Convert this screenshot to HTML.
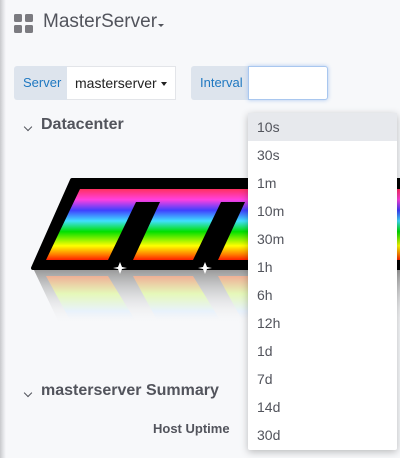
<!DOCTYPE html>
<html><head><style>
*{margin:0;padding:0;box-sizing:border-box}
body{width:400px;height:458px;overflow:hidden;background:#f7f8fa;font-family:"Liberation Sans",Roboto,sans-serif;position:relative;color:#52545c}
.abs{position:absolute}
.shadow{left:0;top:0;width:6px;height:458px;background:linear-gradient(90deg,#c8c9cc,#e6e7ea 60%,#f7f8fa)}
.gi{width:8px;height:8px;background:#7b7b80;border-radius:1.5px}
.lbl{background:#dde4ed;color:#1f78c1;font-size:13px;height:34px;line-height:34px;border-radius:3px 0 0 3px}
.dd{left:248px;top:113px;width:149px;height:337px;background:#fff;box-shadow:0 2px 8px rgba(0,0,0,.25);border-radius:2px}
.dd div{height:28px;line-height:28px;padding-left:9px;font-size:14px;color:#52545c}
.chev{width:6px;height:6px;border-right:1.6px solid #52545c;border-bottom:1.6px solid #52545c;transform:rotate(45deg)}
</style></head><body>
<div class="abs shadow"></div>
<div class="abs" style="left:14px;top:14px;display:grid;grid-template-columns:8px 8px;gap:3px">
<div class="gi"></div><div class="gi"></div><div class="gi"></div><div class="gi"></div></div>
<div class="abs" style="left:43px;top:11px;font-size:19px;color:#52545c">MasterServer</div>
<div class="abs" style="left:158px;top:24px;border-left:3px solid transparent;border-right:3px solid transparent;border-top:3px solid #52545c"></div>

<div class="abs lbl" style="left:14px;top:66px;width:53px;padding-left:9px">Server</div>
<div class="abs" style="left:67px;top:66px;width:109px;height:34px;background:#fff;border:1px solid #e3e5e9;border-left:none;font-size:14px;line-height:32px;padding-left:8px;color:#222">masterserver</div>
<div class="abs" style="left:161px;top:82px;border-left:3.5px solid transparent;border-right:3.5px solid transparent;border-top:4px solid #222"></div>
<div class="abs lbl" style="left:191px;top:66px;width:57px;padding-left:9px">Interval</div>
<div class="abs" style="left:248px;top:66px;width:80px;height:34px;background:#fff;border:1px solid #a9c7ef;box-shadow:0 0 4px #a9c7ef;border-radius:0 3px 3px 0"></div>

<div class="abs chev" style="left:25px;top:124px"></div>
<div class="abs" style="left:41px;top:116px;font-size:16px;font-weight:bold;color:#52545c">Datacenter</div>

<svg class="abs" style="left:0;top:0" width="400" height="340">
<defs>
<linearGradient id="rb" x1="0" y1="189" x2="0" y2="260" gradientUnits="userSpaceOnUse">
<stop offset="0" stop-color="#ff3060"/><stop offset=".15" stop-color="#ff40e0"/><stop offset=".3" stop-color="#4040ff"/><stop offset=".45" stop-color="#40e0ff"/><stop offset=".6" stop-color="#00e000"/><stop offset=".8" stop-color="#ffff00"/><stop offset=".92" stop-color="#ff8000"/><stop offset="1" stop-color="#ff2000"/>
</linearGradient>
<linearGradient id="rf" x1="0" y1="268" x2="0" y2="325" gradientUnits="userSpaceOnUse">
<stop offset="0" stop-color="#888" stop-opacity=".9"/><stop offset="1" stop-color="#f7f8fa" stop-opacity="0"/>
</linearGradient>
<linearGradient id="rf2" x1="0" y1="276" x2="0" y2="320" gradientUnits="userSpaceOnUse">
<stop offset="0" stop-color="#ffb090"/><stop offset=".4" stop-color="#e8ffb0"/><stop offset=".8" stop-color="#e6f2ff"/><stop offset="1" stop-color="#f0f4fb" stop-opacity="0"/>
</linearGradient>
</defs>
<polygon points="33,268 400,268 400,325 60,325" fill="url(#rf)"/>
<polygon points="46,276 108,276 135,320 70,320" fill="url(#rf2)" opacity=".8"/>
<polygon points="133,276 193,276 220,320 157,320" fill="url(#rf2)" opacity=".8"/>
<polygon points="218,276 280,276 305,320 242,320" fill="url(#rf2)" opacity=".8"/>
<polygon points="72,180 400,180 400,268 33,268" fill="#000" stroke="#000" stroke-width="4" stroke-linejoin="round"/>
<polygon points="80,189 400,189 400,260 46,260" fill="url(#rb)"/>
<polygon points="136,202 160,202 133,260 108,260" fill="#000"/>
<polygon points="221,202 245,202 218,260 193,260" fill="#000"/>
<path d="M120 262 L122 267 L127 268 L122 269 L120 274 L118 269 L113 268 L118 267Z" fill="#fff"/>
<path d="M205 262 L207 267 L212 268 L207 269 L205 274 L203 269 L198 268 L203 267Z" fill="#fff"/>
</svg>

<div class="abs chev" style="left:25px;top:390px"></div>
<div class="abs" style="left:41px;top:382px;font-size:16px;font-weight:bold;color:#52545c">masterserver Summary</div>
<div class="abs" style="left:153px;top:421px;font-size:13px;font-weight:bold;color:#52545c">Host Uptime</div>

<div class="abs dd">
<div style="background:#e7e9ed">10s</div><div>30s</div><div>1m</div><div>10m</div><div>30m</div><div>1h</div><div>6h</div><div>12h</div><div>1d</div><div>7d</div><div>14d</div><div>30d</div>
</div>
</body></html>
